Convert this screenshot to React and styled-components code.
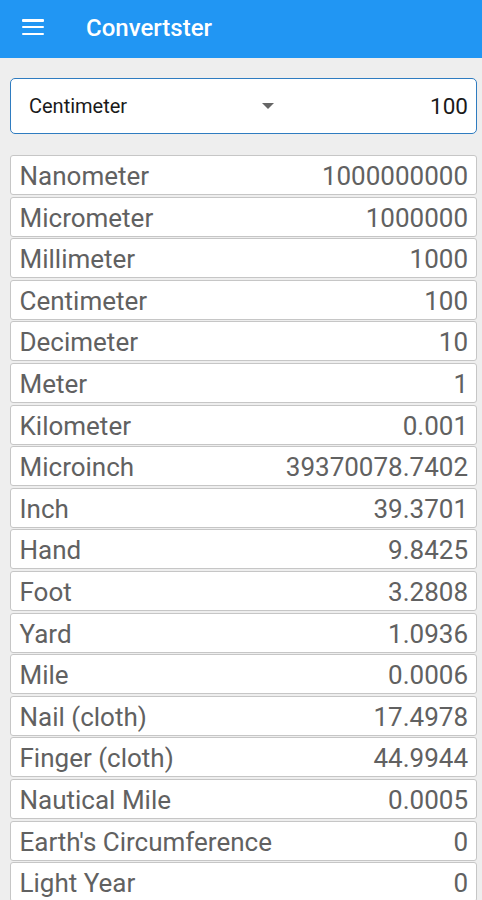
import React from 'react'
import styled, { createGlobalStyle } from 'styled-components'

const GlobalStyle = createGlobalStyle`
   html, body {
      margin: 0;
      padding: 0;
      background: #eeeeee;
      font-family: Roboto, 'Liberation Sans', sans-serif;
   }
`

const Page = styled.div`
   width: 482px;
   height: 900px;
   overflow: hidden;
   background: #eeeeee;
`

const AppBar = styled.header`
   height: 58px;
   background: #2196f3;
   display: flex;
   align-items: center;
   padding: 0 0 0 22px;
   box-sizing: border-box;
   gap: 42px;
`

const MenuButton = styled.div`
   width: 22px;
   height: 16px;
   display: flex;
   flex-direction: column;
   justify-content: space-between;
   margin-top: -4px;

   span {
      display: block;
      height: 2.5px;
      background: #ffffff;
      border-radius: 1px;
   }
`

const Title = styled.h1`
   margin: 0;
   color: #ffffff;
   font-size: 24px;
   font-weight: 500;
   margin-top: -3px;
`

const Content = styled.main`
   padding: 20px 5px 0 10px;
`

const Selector = styled.div`
   height: 56px;
   box-sizing: border-box;
   background: #ffffff;
   border: 1.5px solid #2f7cc0;
   border-radius: 5px;
   display: flex;
   align-items: center;
   padding: 0 8px 0 18px;
`

const UnitSelect = styled.div`
   width: 247px;
   display: flex;
   align-items: center;
   justify-content: space-between;
   font-size: 20px;
   color: #1a1a1a;
`

const Caret = styled.span`
   width: 0;
   height: 0;
   border-left: 6px solid transparent;
   border-right: 6px solid transparent;
   border-top: 6px solid #666666;
   margin-right: 2px;
`

const InputValue = styled.div`
   flex: 1;
   text-align: right;
   font-size: 22.5px;
   color: #1a1a1a;
`

const List = styled.div`
   margin-top: 21px;
   display: flex;
   flex-direction: column;
   gap: 1.6px;
`

const Row = styled.div`
   height: 40px;
   box-sizing: border-box;
   background: #ffffff;
   border: 1.5px solid #c6c6c6;
   border-radius: 3px;
   display: flex;
   align-items: center;
   justify-content: space-between;
   padding: 2px 8px 0 8.5px;
   font-size: 26px;
   color: #616161;
   width: 467px;
   white-space: nowrap;
`

const units = [
   ['Nanometer', '1000000000'],
   ['Micrometer', '1000000'],
   ['Millimeter', '1000'],
   ['Centimeter', '100'],
   ['Decimeter', '10'],
   ['Meter', '1'],
   ['Kilometer', '0.001'],
   ['Microinch', '39370078.7402'],
   ['Inch', '39.3701'],
   ['Hand', '9.8425'],
   ['Foot', '3.2808'],
   ['Yard', '1.0936'],
   ['Mile', '0.0006'],
   ['Nail (cloth)', '17.4978'],
   ['Finger (cloth)', '44.9944'],
   ['Nautical Mile', '0.0005'],
   ["Earth's Circumference", '0'],
   ['Light Year', '0'],
]

const App = () => {
   return (
      <Page>
         <GlobalStyle />
         <AppBar>
            <MenuButton>
               <span />
               <span />
               <span />
            </MenuButton>
            <Title>Convertster</Title>
         </AppBar>
         <Content>
            <Selector>
               <UnitSelect>
                  <span>Centimeter</span>
                  <Caret />
               </UnitSelect>
               <InputValue>100</InputValue>
            </Selector>
            <List>
               {units.map(([name, value]) => (
                  <Row key={name}>
                     <span>{name}</span>
                     <span>{value}</span>
                  </Row>
               ))}
            </List>
         </Content>
      </Page>
   )
}

export default App
